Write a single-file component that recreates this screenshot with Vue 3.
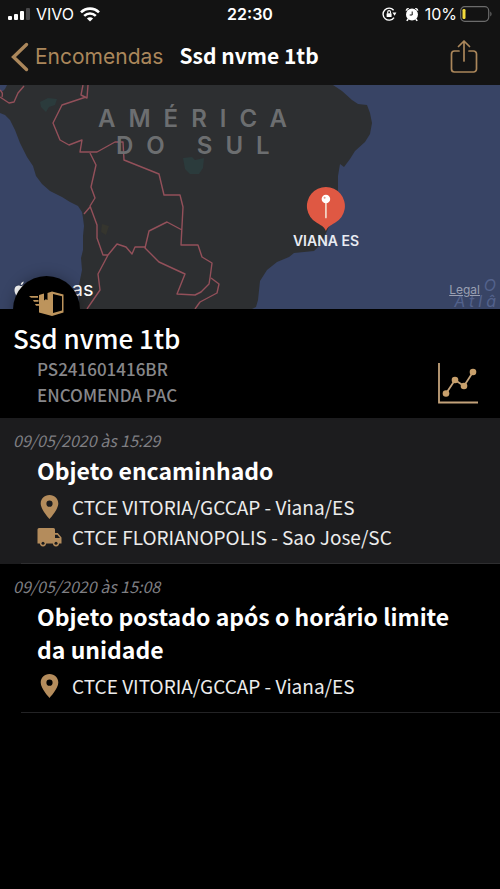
<template>
  <div class="page">
    <header class="top">
      <div class="status-bar">
        <div class="status-left">
          <svg class="signal" width="22" height="14" viewBox="0 0 22 14">
            <rect x="0" y="9" width="4" height="4" rx="1" fill="#fff" />
            <rect x="6" y="7" width="4" height="6" rx="1" fill="#fff" />
            <rect x="12" y="4" width="4" height="9" rx="1" fill="#fff" />
            <rect x="18" y="1" width="4" height="12" rx="1" fill="#48484a" />
          </svg>
          <span class="carrier">VIVO</span>
          <svg width="20" height="15" viewBox="0 0 20 15" fill="none" stroke="#fff" stroke-width="2.6">
            <path d="M1 5.4C6 .4 14 .4 19 5.4" />
            <path d="M4.2 8.9c3.3-3.2 8.3-3.2 11.6 0" />
            <path d="M10 14.6 6.9 11.4c1.8-1.6 4.4-1.6 6.2 0z" fill="#fff" stroke="none" />
          </svg>
        </div>
        <span class="clock">22:30</span>
        <div class="status-right">
          <svg width="15" height="14" viewBox="0 0 15 14" fill="none" stroke="#fff">
            <path d="M11.6 3.2A6 6 0 1 0 12 10.600" stroke-width="1.4" />
            <path d="M10.400 5.500h4l-1.800 3.200z" fill="#fff" stroke="none" />
            <rect x="4.6" y="6.2" width="5" height="3.9" rx=".6" fill="#fff" stroke="none" />
            <path d="M5.700 6.4V5a1.400 1.400 0 0 1 2.800 0v1.4" stroke-width="1.1" />
          </svg>
          <svg class="alarm" width="14" height="15" viewBox="0 0 14 15">
            <circle cx="7" cy="7.6" r="6" fill="#fff" />
            <path d="M.8 4.2C.3 2 2 .5 4.2 1.2zM13.2 4.2C13.7 2 12 .5 9.8 1.2z" fill="#fff" />
            <path d="m3.2 12-1.4 1.9M10.8 12l1.4 1.9" stroke="#fff" stroke-width="1.6" />
            <path d="M7.2 4.500v3.500H4.700" fill="none" stroke="#131313" />
          </svg>
          <span class="percent">10%</span>
          <svg width="32" height="16" viewBox="0 0 32 16">
            <rect x=".7" y=".7" width="28" height="14.6" rx="4" fill="none" stroke="#6b6b6b" stroke-width="1.2" />
            <rect x="2.5" y="3" width="3" height="10" rx="1.2" fill="#f5dc3c" />
            <path d="M30.3 5.5c1.6.8 1.6 4.2 0 5z" fill="#6b6b6b" />
          </svg>
        </div>
      </div>
      <nav class="nav-bar">
        <button type="button" class="back-btn">
          <svg width="18" height="30" viewBox="0 0 18 30" fill="none" stroke="#ab875b" stroke-width="3.4" stroke-linecap="round">
            <path d="M15.5 2.5 2.5 15l13 12.5" />
          </svg>
          <span>Encomendas</span>
        </button>
        <h1 class="nav-title">{{ pedido.nome }}</h1>
        <button type="button" class="share-btn" aria-label="Compartilhar">
          <svg width="28" height="34" viewBox="0 0 28 34" fill="none" stroke="#ab875b" stroke-width="1.7" stroke-linecap="round" stroke-linejoin="round">
            <path d="M9 11H4.5A3 3 0 0 0 1.500 14v15a3 3 0 0 0 3 3h19a3 3 0 0 0 3-3V14a3 3 0 0 0-3-3H19" />
            <path d="M14 21V1.500M8.500 6.500l5.500-5.500 5.500 5.500" />
          </svg>
        </button>
      </nav>
    </header>

    <section class="map">
      <svg class="map-canvas" viewBox="0 0 500 224" preserveAspectRatio="xMidYMid slice">
        <rect width="500" height="224" fill="#2d2f31" />
        <!-- oceano -->
        <g fill="#384465">
          <path d="M0 0H7L5 4 3 6 0 6z" />
          <path d="M0 28l5 2 5 5 5 10 5 13 7 14 6 9 3 10 6 8 8 7 12 6 8 5 8 4 4 6 1 6 1 8-1 10v14l-2 8 1 12-3 15v24H0z" />
          <path d="M333 0l9 6 10 9 6 4 9 1 3 8 2 10-2 11-5 8-10 9-5 8-6 8-4-3-2 12v14l-4 25-7 16-6 13-7 7-20 2-5 4-12 5-10 8-7 11-2 19-2 7-6 3H500V0z" />
        </g>
        <g fill="#2b3b3c">
          <path d="M40 17l8-4 9 1-2 6-6 2-3 5-5-5z" />
          <path d="M183 73l9-1 3 3 9-2-1 10-4 6h-9l-5-5z" />
        </g>
        <path d="M102 139l7 2-3 9-5-3z" fill="#35352e" />
        <!-- fronteiras -->
        <g fill="none" stroke="#93505a" stroke-width="1.4" stroke-linejoin="round">
          <path d="M0 12l9 6 5-1 4-9 6-7" />
          <path d="M83 0l-2 10 6 3 1-13M86 12l-24 8-9 18 7 17 9 5 13-5-2 12h17l18-10h8l1 18 35 14 5 21h16l3 12-2 38h17l4 12 10 6-2 15-1 6-8 8-6 3-18-1 8-20-26-12-14-14 4-17 18-9 15 8" />
          <path d="M90 68l6 12-5 22 4 11-5 8 7 19 0 13 6 17h5l9-11 9 3 6 7 3-7h11M84 129l6-7M108 170l-10 19 2 16-13 19" />
          <path d="M211 193l8 6-2 9-17 9-5 7" />
          <path d="M0 5c2 2 3 3 2 7" />
        </g>
      </svg>
      <div class="continent">
        <span class="continent-line">AMÉRICA</span>
        <span class="continent-line">DO SUL</span>
      </div>
      <div class="ocean-name">
        <span>O</span>
        <span>Atlâ</span>
      </div>
      <div class="marker">
        <svg width="40" height="46" viewBox="0 0 40 46">
          <path d="M20 45C18.5 40.5 13.5 38.5 10.5 36.500A19 19 0 1 1 29.500 36.500C26.500 38.500 21.500 40.500 20 45z" fill="#df5843" />
          <path d="M20 17v14.500" stroke="#f3d9ca" stroke-width="1.7" stroke-linecap="round" />
          <circle cx="20" cy="13" r="4.3" fill="#fff" />
          <circle cx="18.7" cy="11.7" r="1" fill="#df9a8c" />
        </svg>
        <span>VIANA ES</span>
      </div>
      <div class="map-brand">
        <svg width="14" height="17" viewBox="0 0 14 17" fill="#fff">
          <path d="M9.700 4.400c-1 0-1.900.7-2.600.7S5.400 4.400 4.300 4.500C2.100 4.600.5 6.500.5 9c0 3.300 2.300 7 4.200 7 .9 0 1.400-.6 2.500-.6s1.500.6 2.500.6c1.400 0 2.800-2.200 3.400-4-2.900-1.300-2.700-4.900 0-6-.8-1-2-1.600-3.400-1.600zM9.600.5C8 .7 6.600 2.200 6.800 4c1.600 0 3-1.700 2.800-3.500z" />
        </svg>
        <span>Mapas</span>
      </div>
      <a class="legal" href="#">Legal</a>
    </section>

    <section class="summary">
      <div class="badge">
        <svg width="36" height="26" viewBox="0 0 36 26" fill="#bd945c">
          <path d="M0 5h9v1.700H2zM4 9h5.500v1.700H5zM6 13h4v1.700H7z" />
          <path d="M10 4 15 2.500v7l1.800-1.200L18.500 9V2L23 .5 34.500 3.500v18L23 25 10 21.500z" />
          <path d="M24 3 33 5.300V19.500L24 22z" fill="#000" />
        </svg>
      </div>
      <div class="summary-text">
        <h2>{{ pedido.nome }}</h2>
        <p>{{ pedido.codigo }}</p>
        <p>{{ pedido.servico }}</p>
      </div>
      <button type="button" class="chart-btn" aria-label="Estatísticas">
        <svg width="42" height="42" viewBox="0 0 42 42" fill="none" stroke="#c3a27a" stroke-width="1.8">
          <path d="M2 1v39.500h39" />
          <path d="M9 31.500 18 18l9 6 9-14" />
          <g fill="#c8a06c" stroke="none">
            <circle cx="9" cy="31.500" r="3.300" />
            <circle cx="18" cy="18" r="3.300" />
            <circle cx="27" cy="24" r="3.300" />
            <circle cx="36" cy="10" r="3.300" />
          </g>
        </svg>
      </button>
    </section>

    <ul class="events">
      <li v-for="evento in eventos" :key="evento.data" class="event" :class="{ latest: evento.atual }">
        <time>{{ evento.data }}</time>
        <h3>{{ evento.titulo }}</h3>
        <div v-for="local in evento.locais" :key="local.nome" class="place">
          <svg v-if="local.tipo === 'origem'" width="26" height="26" viewBox="0 0 26 26" fill="#b48c5c">
            <path fill-rule="evenodd" d="M12.500 1C7.300 1 3.700 4.800 3.700 9.600 3.700 15.800 12.500 25 12.500 25s8.800-9.200 8.800-15.400C21.300 4.800 17.700 1 12.500 1zm0 5.600a3.100 3.100 0 1 1 0 6.200 3.100 3.100 0 0 1 0-6.200z" />
          </svg>
          <svg v-else width="26" height="26" viewBox="0 0 26 26" fill="#b48c5c">
            <path fill-rule="evenodd" d="M2 4h14.500A1.500 1.500 0 0 1 18 5.500V9h2.800L24.500 13.500V19.500H.5V5.500A1.500 1.500 0 0 1 2 4zM18 10.800v3.200h5l-2.700-3.200z" />
            <circle cx="6" cy="19.300" r="3.100" />
            <circle cx="19" cy="19.300" r="3.100" />
            <circle cx="6" cy="19.300" r="1.500" fill="#1c1c1e" />
            <circle cx="19" cy="19.300" r="1.500" fill="#1c1c1e" />
          </svg>
          <span>{{ local.nome }}</span>
        </div>
      </li>
    </ul>
  </div>
</template>

<script setup>
const pedido = {
  nome: 'Ssd nvme 1tb',
  codigo: 'PS241601416BR',
  servico: 'ENCOMENDA PAC'
}

const eventos = [
  {
    data: '09/05/2020 às 15:29',
    titulo: 'Objeto encaminhado',
    atual: true,
    locais: [
      { tipo: 'origem', nome: 'CTCE VITORIA/GCCAP - Viana/ES' },
      { tipo: 'destino', nome: 'CTCE FLORIANOPOLIS - Sao Jose/SC' }
    ]
  },
  {
    data: '09/05/2020 às 15:08',
    titulo: 'Objeto postado após o horário limite da unidade',
    atual: false,
    locais: [
      { tipo: 'origem', nome: 'CTCE VITORIA/GCCAP - Viana/ES' }
    ]
  }
]
</script>

<style>
body {
  margin: 0;
  background: #000;
}
</style>

<style scoped>
.page {
  min-height: 100vh;
  background: #000;
  color: #fff;
  font-family: 'Noto Sans CJK SC', sans-serif;
}

h1,
h2,
h3,
p,
ul {
  margin: 0;
  padding: 0;
}

svg {
  display: block;
  flex-shrink: 0;
}

button {
  padding: 0;
  border: none;
  background: none;
  cursor: pointer;
}

.top {
  background: #131313;
}

.status-bar {
  display: grid;
  grid-template-columns: 1fr auto 1fr;
  align-items: center;
  height: 28px;
  padding: 0 8px;
  font-family: Inter, sans-serif;
  font-size: 16px;
}

.status-left,
.status-right {
  display: flex;
  align-items: center;
  gap: 6px;
}

.status-right {
  justify-content: flex-end;
}

.alarm {
  margin-left: 2px;
}

.status-right svg:last-child {
  margin-left: -3px;
}

.clock {
  font-weight: 600;
}

.nav-bar {
  display: grid;
  grid-template-columns: 1fr auto 1fr;
  align-items: center;
  column-gap: 16px;
  height: 57px;
  padding: 0 22px 0 11px;
}

.back-btn {
  display: flex;
  align-items: center;
  gap: 6px;
  color: #ab875b;
  font-family: Inter, sans-serif;
  font-size: 21px;
}

.nav-title {
  padding-bottom: 4px;
  font-size: 21px;
  font-weight: 700;
  line-height: 30px;
  white-space: nowrap;
}

.share-btn {
  justify-self: end;
}

.map {
  position: relative;
  height: 224px;
  overflow: hidden;
  font-family: Inter, sans-serif;
}

.map-canvas {
  width: 100%;
  height: 100%;
}

.continent {
  position: absolute;
  top: 20px;
  left: 98px;
  display: flex;
  flex-direction: column;
  color: #6c6e70;
  font-size: 24px;
  font-weight: 600;
  line-height: 27px;
  letter-spacing: 13px;
}

.continent-line + .continent-line {
  padding-left: 18px;
}

.ocean-name {
  position: absolute;
  right: 0;
  bottom: 0;
  display: flex;
  flex-direction: column;
  align-items: flex-end;
  color: #53628c;
  font-size: 16px;
  font-style: italic;
  line-height: 16px;
  letter-spacing: 4px;
}

.marker {
  position: absolute;
  top: 101px;
  left: 326px;
  display: flex;
  flex-direction: column;
  align-items: center;
  transform: translateX(-50%);
  color: #e8ebf2;
  font-size: 14px;
  font-weight: 600;
  line-height: 18px;
  white-space: nowrap;
}

.map-brand {
  position: absolute;
  left: 14px;
  bottom: 9px;
  display: flex;
  align-items: center;
  gap: 2px;
  font-size: 20px;
  line-height: 22px;
}

.legal {
  position: absolute;
  right: 20px;
  bottom: 11px;
  color: #9aa0b2;
  font-size: 12px;
  line-height: 16px;
}

.summary {
  position: relative;
  display: flex;
  justify-content: space-between;
  align-items: flex-end;
  box-sizing: border-box;
  min-height: 109px;
  padding: 11px 21px 10px 13px;
}

.badge {
  position: absolute;
  top: -33px;
  left: 13px;
  display: flex;
  justify-content: center;
  align-items: center;
  box-sizing: border-box;
  width: 67px;
  height: 67px;
  padding-bottom: 12px;
  border-radius: 50%;
  background: #000;
  box-shadow: 0 0 14px rgba(0, 0, 0, 0.3);
}

.summary-text {
  position: relative;
}

.summary h2 {
  font-size: 26px;
  font-weight: 500;
  line-height: 36px;
}

.summary p {
  padding-left: 24px;
  color: #87878a;
  font-size: 17px;
  font-weight: 500;
  line-height: 26px;
}

.chart-btn {
  margin-bottom: 4px;
}

.events {
  list-style: none;
}

.event {
  position: relative;
  padding: 10px 24px 12px 37px;
}

.event.latest {
  background: #1c1c1e;
}

.event::after {
  content: '';
  position: absolute;
  right: 0;
  bottom: 0;
  left: 21px;
  height: 1px;
  background: #232325;
}

.event.latest::after {
  background: #2e2e30;
}

.event time {
  display: block;
  margin: 0 0 2px -24px;
  color: #7f7f83;
  font-size: 16px;
  font-style: italic;
  line-height: 24px;
}

.event h3 {
  margin-bottom: 5px;
  font-size: 23px;
  font-weight: 700;
  line-height: 33px;
}

.place {
  display: flex;
  align-items: center;
  gap: 9px;
  color: #ececec;
  font-size: 19px;
  line-height: 30px;
}
</style>
